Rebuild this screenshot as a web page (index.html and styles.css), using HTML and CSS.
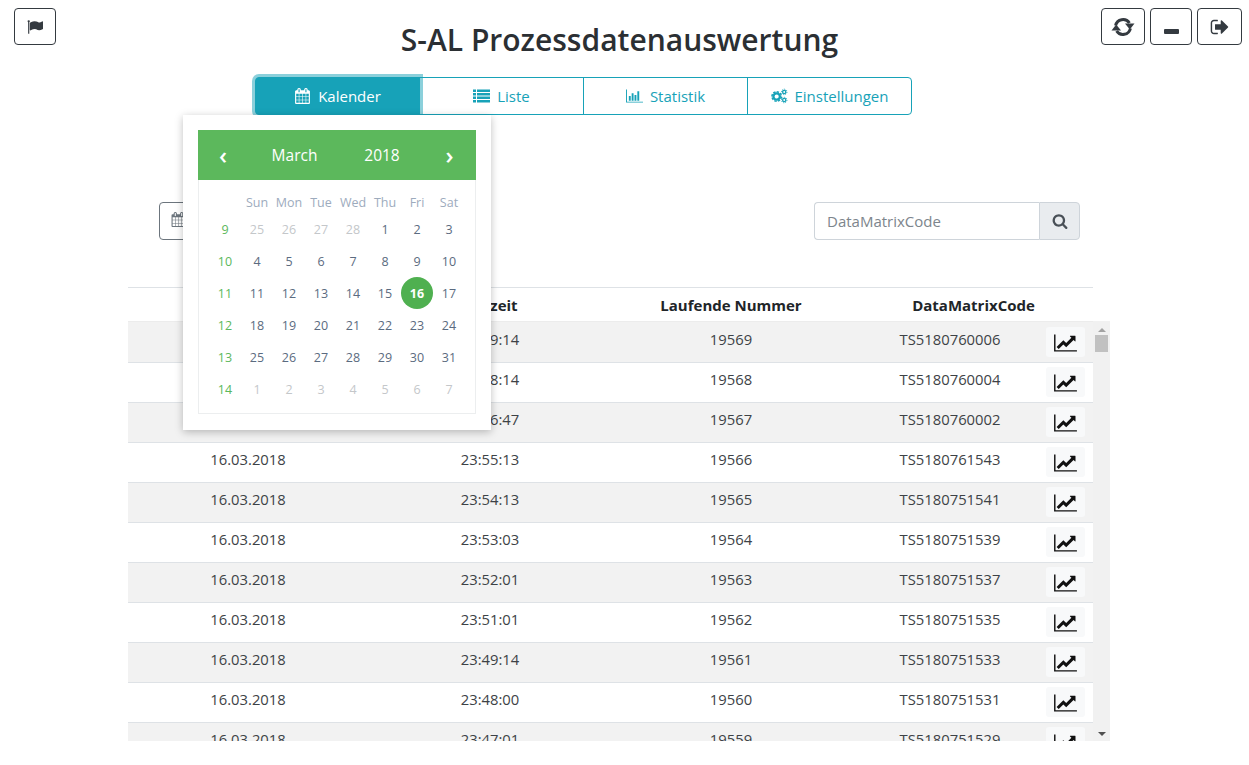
FILE: index.html
```html
<!DOCTYPE html>
<html lang="de">
<head>
  <meta charset="UTF-8" />
  <meta name="viewport" content="width=device-width, initial-scale=1.0"/>
  <title>S-AL Prozessdatenauswertung</title>
  <link rel="stylesheet" href="styles.css">
</head>
<body>

<svg class="defs" aria-hidden="true">
  <symbol id="i-chart" viewBox="0 0 2048 1792"><path d="M2048 1536v128h-2048v-1536h128v1408h1920zm-128-1248v435q0 21-19.5 29.5t-35.5-7.5l-121-121-633 633q-10 10-23 10t-23-10l-233-233-416 416-192-192 585-585q10-10 23-10t23 10l233 233 464-464-121-121q-16-16-7.5-35.5t29.5-19.5h435q14 0 23 9t9 23z"/></symbol>
  <symbol id="i-calendar" viewBox="0 0 1792 1792"><path d="M192 1664h288v-288h-288v288zm352 0h320v-288h-320v288zm-352-352h288v-320h-288v320zm352 0h320v-320h-320v320zm-352-384h288v-288h-288v288zm736 736h320v-288h-320v288zm-384-736h320v-288h-320v288zm768 736h288v-288h-288v288zm-384-352h320v-320h-320v320zm-352-864v-288q0-13-9.5-22.5t-22.5-9.5h-64q-13 0-22.5 9.5t-9.5 22.5v288q0 13 9.5 22.5t22.5 9.5h64q13 0 22.5-9.5t9.5-22.5zm736 864h288v-320h-288v320zm-384-384h320v-288h-320v288zm384 0h288v-288h-288v288zm32-480v-288q0-13-9.5-22.5t-22.5-9.5h-64q-13 0-22.5 9.5t-9.5 22.5v288q0 13 9.5 22.5t22.5 9.5h64q13 0 22.5-9.5t9.5-22.5zm384-64v1280q0 52-38 90t-90 38h-1408q-52 0-90-38t-38-90v-1280q0-52 38-90t90-38h128v-96q0-66 47-113t113-47h64q66 0 113 47t47 113v96h384v-96q0-66 47-113t113-47h64q66 0 113 47t47 113v96h128q52 0 90 38t38 90z"/></symbol>
</svg>

<header class="topbar">
  <button class="tool-btn" type="button">
    <svg class="ic-flag" viewBox="0 0 1792 1792"><path d="M320 256q0 72-64 110v1266q0 13-9.5 22.5t-22.5 9.5h-64q-13 0-22.5-9.5t-9.5-22.5v-1266q-64-38-64-110 0-53 37.5-90.5t90.5-37.5 90.5 37.5 37.5 90.5zm1472 64v763q0 25-12.5 38.5t-39.5 27.5q-215 116-369 116-61 0-123.5-22t-108.5-48-115.5-48-142.5-22q-192 0-464 146-17 9-33 9-26 0-45-19t-19-45v-742q0-32 31-55 21-14 79-43 236-120 421-120 107 0 200 29t219 88q38 19 88 19 54 0 117.5-21t110-47 88-47 54.5-21q26 0 45 19t19 45z"/></svg>
  </button>
  <h1 class="title">S-AL Prozessdatenauswertung</h1>
  <div class="tool-group">
    <button class="tool-btn btn-refresh" type="button">
      <svg class="ic-refresh" viewBox="0 0 24 20">
        <path class="arc" d="M4.6 8.5A7.6 7.6 0 0 1 18.4 6"/>
        <path d="M14 6.5h9.5l-4.7 6z"/>
        <path class="arc" d="M19.4 11.5A7.6 7.6 0 0 1 5.6 14"/>
        <path d="M.5 13.5H10l-4.8-6z"/>
      </svg>
    </button>
    <button class="tool-btn" type="button"><span class="ic-minus"></span></button>
    <button class="tool-btn btn-out" type="button">
      <svg class="ic-out" viewBox="0 0 1792 1792"><path d="M704 1440q0 4 1 20t.5 26.5-3 23.5-10 19.5-20.5 6.5h-320q-119 0-203.5-84.5t-84.5-203.5v-704q0-119 84.5-203.5t203.5-84.5h320q13 0 22.5 9.5t9.5 22.5q0 4 1 20t.5 26.5-3 23.5-10 19.5-20.5 6.5h-320q-66 0-113 47t-47 113v704q0 66 47 113t113 47h312l11.5 1 11.5 3 8 5.5 7 9 2 13.5zm928-544q0 26-19 45l-544 544q-19 19-45 19t-45-19-19-45v-288h-448q-26 0-45-19t-19-45v-384q0-26 19-45t45-19h448v-288q0-26 19-45t45-19 45 19l544 544q19 19 19 45z"/></svg>
    </button>
  </div>
</header>

<nav class="tabs">
  <a class="tab tab-cal active">
    <svg class="tab-ic"><use href="#i-calendar"/></svg>Kalender
  </a>
  <a class="tab tab-list">
    <svg class="tab-ic" viewBox="0 0 17 13"><path d="M0 0h3v2.5H0zM4 0h13v2.5H4zM0 3.5h3V6H0zM4 3.5h13V6H4zM0 7h3v2.5H0zM4 7h13v2.5H4zM0 10.5h3V13H0zM4 10.5h13V13H4z"/></svg>Liste
  </a>
  <a class="tab tab-stat">
    <svg class="tab-ic" viewBox="0 0 18 14"><path d="M0 0h1v13h17v1H0zM3 7h2v5H3zM6 4h2v8H6zM9 6h2v6H9zM12 2h2v10h-2z"/></svg>Statistik
  </a>
  <a class="tab tab-set">
    <svg class="tab-ic" viewBox="0 0 18 15">
      <circle class="gear" cx="6" cy="8" r="3.4"/>
      <circle class="teeth" cx="6" cy="8" r="5" pathLength="24"/>
      <circle class="gear thin" cx="14" cy="3.2" r="1.7"/>
      <circle class="teeth small" cx="14" cy="3.2" r="2.9" pathLength="16"/>
      <circle class="gear thin" cx="14" cy="11.8" r="1.7"/>
      <circle class="teeth small" cx="14" cy="11.8" r="2.9" pathLength="16"/>
    </svg>Einstellungen
  </a>
</nav>

<section class="toolbar">
  <button class="date-btn" type="button"><svg class="date-ic"><use href="#i-calendar"/></svg></button>
  <div class="search">
    <input type="text" placeholder="DataMatrixCode" />
    <span class="search-btn">
      <svg viewBox="0 0 1792 1792"><path d="M1216 832q0-185-131.5-316.5t-316.5-131.5-316.5 131.5-131.5 316.5 131.5 316.5 316.5 131.5 316.5-131.5 131.5-316.5zm512 832q0 52-38 90t-90 38q-54 0-90-38l-343-342q-179 124-399 124-143 0-273.5-55.5t-225-150-150-225-55.5-273.5 55.5-273.5 150-225 225-150 273.5-55.5 273.5 55.5 225 150 150 225 55.5 273.5q0 220-124 399l343 343q37 37 37 90z"/></svg>
    </span>
  </div>
</section>

<main class="table-wrap">
  <div class="thead">
    <span>Datum</span>
    <span>Uhrzeit</span>
    <span>Laufende Nummer</span>
    <span>DataMatrixCode</span>
  </div>
  <div class="tbody-wrap">
    <div class="tbody">
      <div class="row"><span>16.03.2018</span><span>23:59:14</span><span>19569</span><span>TS5180760006</span><a class="chart-btn"><svg><use href="#i-chart"/></svg></a></div>
      <div class="row"><span>16.03.2018</span><span>23:58:14</span><span>19568</span><span>TS5180760004</span><a class="chart-btn"><svg><use href="#i-chart"/></svg></a></div>
      <div class="row"><span>16.03.2018</span><span>23:56:47</span><span>19567</span><span>TS5180760002</span><a class="chart-btn"><svg><use href="#i-chart"/></svg></a></div>
      <div class="row"><span>16.03.2018</span><span>23:55:13</span><span>19566</span><span>TS5180761543</span><a class="chart-btn"><svg><use href="#i-chart"/></svg></a></div>
      <div class="row"><span>16.03.2018</span><span>23:54:13</span><span>19565</span><span>TS5180751541</span><a class="chart-btn"><svg><use href="#i-chart"/></svg></a></div>
      <div class="row"><span>16.03.2018</span><span>23:53:03</span><span>19564</span><span>TS5180751539</span><a class="chart-btn"><svg><use href="#i-chart"/></svg></a></div>
      <div class="row"><span>16.03.2018</span><span>23:52:01</span><span>19563</span><span>TS5180751537</span><a class="chart-btn"><svg><use href="#i-chart"/></svg></a></div>
      <div class="row"><span>16.03.2018</span><span>23:51:01</span><span>19562</span><span>TS5180751535</span><a class="chart-btn"><svg><use href="#i-chart"/></svg></a></div>
      <div class="row"><span>16.03.2018</span><span>23:49:14</span><span>19561</span><span>TS5180751533</span><a class="chart-btn"><svg><use href="#i-chart"/></svg></a></div>
      <div class="row"><span>16.03.2018</span><span>23:48:00</span><span>19560</span><span>TS5180751531</span><a class="chart-btn"><svg><use href="#i-chart"/></svg></a></div>
      <div class="row"><span>16.03.2018</span><span>23:47:01</span><span>19559</span><span>TS5180751529</span><a class="chart-btn"><svg><use href="#i-chart"/></svg></a></div>
    </div>
    <div class="scrollbar">
      <span class="arrow up"></span>
      <span class="thumb"></span>
      <span class="arrow down"></span>
    </div>
  </div>
</main>

<!-- datepicker popup lies over the toolbar and table -->
<div class="picker">
  <div class="picker-head">
    <span class="nav">&lsaquo;</span>
    <span class="month">March</span>
    <span class="year">2018</span>
    <span class="nav">&rsaquo;</span>
  </div>
  <div class="cal">
    <span></span><b>Sun</b><b>Mon</b><b>Tue</b><b>Wed</b><b>Thu</b><b>Fri</b><b>Sat</b>
    <i>9</i><span class="off">25</span><span class="off">26</span><span class="off">27</span><span class="off">28</span><span>1</span><span>2</span><span>3</span>
    <i>10</i><span>4</span><span>5</span><span>6</span><span>7</span><span>8</span><span>9</span><span>10</span>
    <i>11</i><span>11</span><span>12</span><span>13</span><span>14</span><span>15</span><span class="today">16</span><span>17</span>
    <i>12</i><span>18</span><span>19</span><span>20</span><span>21</span><span>22</span><span>23</span><span>24</span>
    <i>13</i><span>25</span><span>26</span><span>27</span><span>28</span><span>29</span><span>30</span><span>31</span>
    <i>14</i><span class="off">1</span><span class="off">2</span><span class="off">3</span><span class="off">4</span><span class="off">5</span><span class="off">6</span><span class="off">7</span>
  </div>
</div>

</body>
</html>
```

FILE: styles.css
```css
* {
  box-sizing: border-box;
}

body {
  margin: 0;
  height: 765px;
  overflow: hidden;
  background: #fff;
  font-family: "Open Sans", "Noto Sans", sans-serif;
  font-size: 14.8px;
  color: #212529;
}

.defs {
  display: none;
}

.topbar {
  display: flex;
  align-items: flex-start;
  height: 77px;
  padding: 8px 7px 0 14px;
}

.title {
  flex: 1;
  margin: 12px 0 0;
  padding-left: 82px;
  text-align: center;
  font-size: 30px;
  font-weight: 600;
  line-height: 40px;
  color: #2b2f33;
}

.tool-group {
  display: flex;
  gap: 5px;
}

.tool-btn {
  display: flex;
  align-items: center;
  justify-content: center;
  width: 42px;
  height: 37px;
  padding: 0;
  background: #fff;
  border: 1px solid #343a40;
  border-radius: 4px;
}

.btn-refresh {
  width: 44px;
}

.btn-out {
  width: 45px;
}

.tool-btn svg {
  fill: #343a40;
}

.ic-flag {
  width: 16px;
  height: 16px;
}

.ic-refresh {
  width: 24px;
  height: 20px;
}

.arc {
  fill: none;
  stroke: #343a40;
  stroke-width: 3;
}

.ic-out {
  width: 20px;
  height: 20px;
}

.ic-minus {
  display: block;
  width: 15px;
  height: 5px;
  margin-top: 9px;
  border-radius: 1px;
  background: #343a40;
}

.tabs {
  display: flex;
  height: 38px;
  margin-left: 255px;
  width: 657px;
  font-size: 15px;
}

.tab {
  display: flex;
  align-items: center;
  justify-content: center;
  border: 1px solid #17a2b8;
  margin-left: -1px;
  color: #17a2b8;
}

.tab-cal {
  width: 165px;
  margin-left: 0;
  border-radius: 4px 0 0 4px;
}

.tab-list {
  width: 165px;
}

.tab-stat {
  width: 165px;
}

.tab-set {
  width: 165px;
  border-radius: 0 4px 4px 0;
}

.tab.active {
  position: relative;
  z-index: 1;
  background: #17a2b8;
  color: #fff;
  box-shadow: 0 0 0 3px rgba(23, 162, 184, 0.5);
}

.tab-ic {
  width: 17px;
  height: 16px;
  margin-right: 7px;
  fill: currentColor;
}

.gear {
  fill: none;
  stroke: currentColor;
  stroke-width: 2.4;
}

.gear.thin {
  stroke-width: 1.4;
}

.teeth {
  fill: none;
  stroke: currentColor;
  stroke-width: 1.6;
  stroke-dasharray: 2 1;
}

.teeth.small {
  stroke-width: 1;
  stroke-dasharray: 1 1;
}

.toolbar {
  display: flex;
  justify-content: space-between;
  width: 921px;
  height: 38px;
  margin: 87px 0 0 159px;
}

.date-btn {
  width: 160px;
  height: 38px;
  padding: 0 0 0 11px;
  text-align: left;
  background: #fff;
  border: 1px solid #6c757d;
  border-radius: 4px;
}

.date-ic {
  width: 15px;
  height: 15px;
  fill: #6c757d;
}

.search {
  display: flex;
  width: 266px;
}

.search input {
  flex: 1;
  min-width: 0;
  padding: 0 12px;
  font: inherit;
  font-size: 15px;
  border: 1px solid #ced4da;
  border-right: 0;
  border-radius: 4px 0 0 4px;
}

.search input::placeholder {
  color: #7d858c;
}

.search-btn {
  display: flex;
  align-items: center;
  justify-content: center;
  width: 41px;
  background: #e9ecef;
  border: 1px solid #ced4da;
  border-radius: 0 4px 4px 0;
}

.search-btn svg {
  width: 16px;
  height: 16px;
  fill: #495057;
}

.table-wrap {
  width: 982px;
  margin: 47px 0 0 128px;
}

.thead {
  display: grid;
  grid-template-columns: 240px 244px 238px 247px;
  width: 965px;
  height: 34px;
  border-top: 1px solid #dee2e6;
  text-align: center;
  font-size: 15px;
  font-weight: 700;
  line-height: 34px;
}

.tbody-wrap {
  display: flex;
  height: 420px;
  overflow: hidden;
}

.tbody {
  width: 965px;
  flex: none;
}

.row {
  display: grid;
  grid-template-columns: 240px 244px 238px 200px 43px;
  height: 40px;
  padding-top: 5px;
  border-top: 1px solid #dee2e6;
  text-align: center;
  line-height: 22px;
  color: #3d4246;
}

.row:nth-child(odd) {
  background: #f2f2f2;
}

.row:first-child {
  height: 41px;
  padding-top: 6px;
  border-top-color: #ececec;
}

.chart-btn {
  display: flex;
  align-items: center;
  justify-content: center;
  justify-self: start;
  width: 39px;
  height: 30px;
  margin: -1px 0 0 -4px;
  padding-top: 1px;
  border-radius: 3px;
  background: #f8f9fa;
}

.chart-btn svg {
  width: 23px;
  height: 20px;
  fill: #111;
}

.scrollbar {
  display: flex;
  flex-direction: column;
  align-items: center;
  width: 17px;
  background: #f1f1f1;
}

.thumb {
  width: 13px;
  height: 17px;
  margin-top: 3px;
  background: #c1c1c1;
}

.arrow {
  width: 0;
  height: 0;
  border-left: 4px solid transparent;
  border-right: 4px solid transparent;
}

.arrow.up {
  margin-top: 7px;
  border-bottom: 4px solid #a3a3a3;
}

.arrow.down {
  margin-top: auto;
  margin-bottom: 5px;
  border-top: 4px solid #505050;
}

.picker {
  position: absolute;
  left: 183px;
  top: 115px;
  z-index: 2;
  width: 308px;
  height: 315px;
  padding: 15px;
  background: #fff;
  box-shadow: 0 2px 8px rgba(0, 0, 0, 0.25);
}

.picker-head {
  display: grid;
  grid-template-columns: 50px 93px 82px 1fr;
  align-items: center;
  height: 50px;
  background: #5cb85c;
  color: #fff;
  font-size: 15.5px;
  text-align: center;
}

.picker-head .nav {
  font-size: 24px;
  font-weight: 600;
  line-height: 1;
}

.cal {
  display: grid;
  grid-template-columns: repeat(8, 32px);
  grid-template-rows: 22px repeat(6, 32px);
  align-items: center;
  justify-items: center;
  height: 234px;
  padding: 11px 0 0 10px;
  border: 1px solid #eceeef;
  border-top: 0;
  font-size: 12.5px;
  color: #5b6b80;
}

.cal b {
  font-weight: 400;
  color: #9dabbd;
}

.cal i {
  font-style: normal;
  color: #5cb85c;
}

.cal .off {
  color: #c4c7ca;
}

.cal .today {
  display: flex;
  align-items: center;
  justify-content: center;
  width: 32px;
  height: 32px;
  border-radius: 50%;
  background: #4fb050;
  color: #fff;
  font-weight: 700;
}
```
